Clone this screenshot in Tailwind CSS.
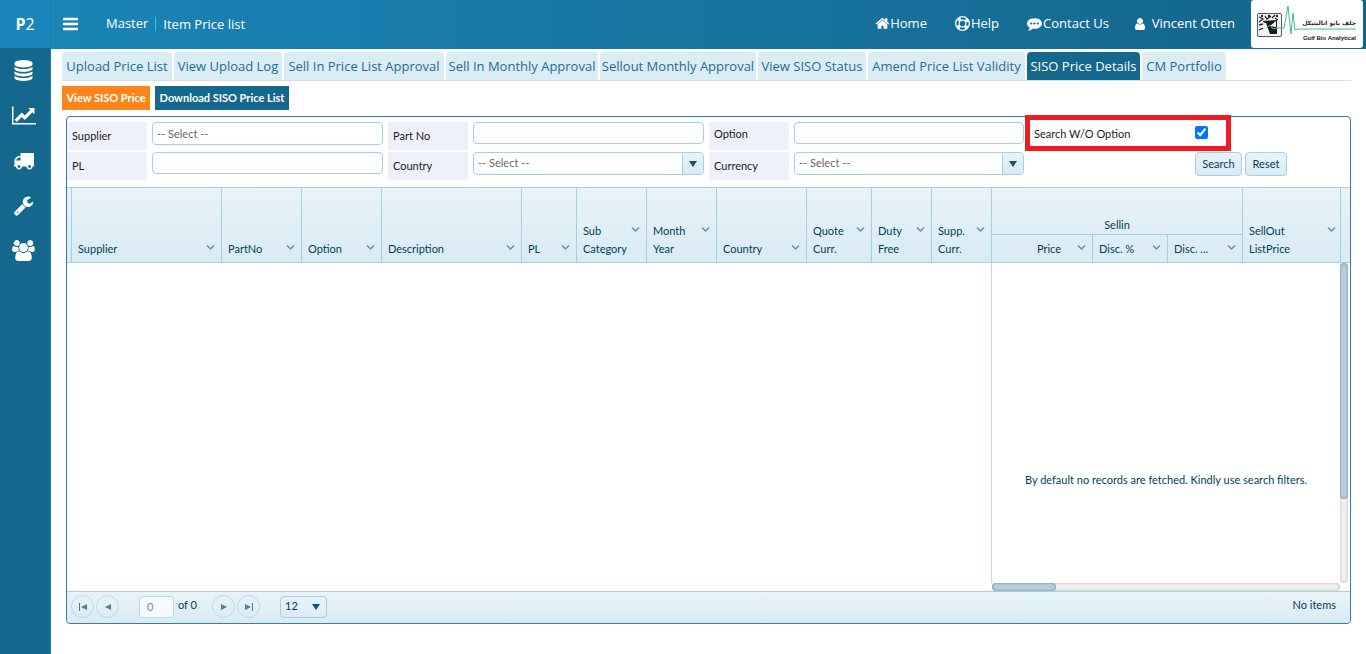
<!DOCTYPE html>
<html lang="en">
<head>
    <meta charset="UTF-8">
    <meta name="viewport" content="width=device-width, initial-scale=1.0">
    <title>Item Price list</title>
    <script src="https://cdn.jsdelivr.net/npm/@tailwindcss/browser@4"></script>
</head>
<body class="flex min-h-screen bg-white font-['Lato',sans-serif] text-[11px] text-[#003f59]">

    <!-- Sidebar -->
    <aside class="w-[51px] shrink-0 bg-[#14688d] border-r border-[#1a7db0] font-['Open_Sans',sans-serif]">
        <a href="#" class="flex h-12 items-center justify-center bg-[#1a85b8] text-base text-white"><b>P</b>2</a>
        <nav class="flex flex-col items-center pr-[3px] text-white">
            <a href="#" aria-label="Master" class="flex h-[45px] items-center"><svg class="size-[21px]" viewBox="0 0 1792 1792" fill="currentColor"><path d="M896 768q237 0 443-43t325-127v170q0 69-103 128t-280 93.5-385 34.5-385-34.5-280-93.5-103-128v-170q119 84 325 127t443 43zm0 768q237 0 443-43t325-127v170q0 69-103 128t-280 93.5-385 34.5-385-34.5-280-93.5-103-128v-170q119 84 325 127t443 43zm0-384q237 0 443-43t325-127v170q0 69-103 128t-280 93.5-385 34.5-385-34.5-280-93.5-103-128v-170q119 84 325 127t443 43zm0-1152q208 0 385 34.5t280 93.5 103 128v128q0 69-103 128t-280 93.5-385 34.5-385-34.5-280-93.5-103-128v-128q0-69 103-128t280-93.5 385-34.5z"/></svg></a>
            <a href="#" aria-label="Sales" class="flex h-[45px] items-center"><svg class="h-[21px] w-6" viewBox="0 0 2048 1792" fill="currentColor"><path d="M2048 1536v128h-2048v-1536h128v1408h1920zm-128-1248v435q0 21-19.5 29.5t-35.5-7.5l-121-121-633 633q-10 10-23 10t-23-10l-233-233-416 416-192-192 585-585q10-10 23-10t23 10l233 233 464-464-121-121q-16-16-7.5-35.5t29.5-19.5h435q14 0 23 9t9 23z"/></svg></a>
            <a href="#" aria-label="Logistics" class="flex h-[45px] items-center"><svg class="size-[21px]" viewBox="0 0 1792 1792" fill="currentColor"><path d="M640 1408q0-52-38-90t-90-38-90 38-38 90 38 90 90 38 90-38 38-90zm-384-512h384v-256h-158q-13 0-22 9l-195 195q-9 9-9 22v30zm1280 512q0-52-38-90t-90-38-90 38-38 90 38 90 90 38 90-38 38-90zm256-1088v1024q0 15-4 26.5t-13.5 18.5-16.5 11.5-23.5 6-22.5 2-25.5 0-22.5-.5q0 106-75 181t-181 75-181-75-75-181h-384q0 106-75 181t-181 75-181-75-75-181h-64q-3 0-22.5.5t-25.5 0-22.5-2-23.5-6-16.5-11.5-13.5-18.5-4-26.5q0-26 19-45t45-19v-320q0-8-.5-35t0-38 2.5-34.5 6.5-37 14-30.5 22.5-30l198-198q19-19 50.5-32t58.5-13h160v-192q0-26 19-45t45-19h1024q26 0 45 19t19 45z"/></svg></a>
            <a href="#" aria-label="Service" class="flex h-[45px] items-center"><svg class="size-[21px]" viewBox="0 0 1792 1792" fill="currentColor"><path d="M448 1472q0-26-19-45t-45-19-45 19-19 45 19 45 45 19 45-19 19-45zm644-420l-682 682q-37 37-90 37-52 0-91-37l-106-108q-38-36-38-90 0-53 38-91l681-681q39 98 114.5 173.5t173.5 114.5zm634-435q0 39-23 106-47 134-164.5 217.5t-258.5 83.5q-185 0-316.5-131.5t-131.5-316.5 131.5-316.5 316.5-131.5q58 0 121.5 16.5t107.5 46.5q16 11 16 28t-16 28l-293 169v224l193 107q5-3 79-48.5t135.5-81 70.5-35.5q15 0 23.5 10t8.5 25z"/></svg></a>
            <a href="#" aria-label="Users" class="flex h-[45px] items-center"><svg class="h-[21px] w-[23px]" viewBox="0 0 1920 1792" fill="currentColor"><path d="M593 896q-162 5-265 128h-134q-82 0-138-40.5t-56-118.5q0-353 124-353 6 0 43.5 21t97.5 42.5 119 21.5q67 0 133-23-5 37-5 66 0 139 81 256zm1071 637q0 120-73 189.5t-194 69.5h-874q-121 0-194-69.5t-73-189.5q0-53 3.5-103.5t14-109 26.5-108.5 43-97.5 62-81 85.5-53.5 111.5-20q10 0 43 21.5t73 48 107 48 135 21.5 135-21.5 107-48 73-48 43-21.5q61 0 111.5 20t85.5 53.5 62 81 43 97.5 26.5 108.5 14 109 3.5 103.5zm-1024-1277q0 106-75 181t-181 75-181-75-75-181 75-181 181-75 181 75 75 181zm704 384q0 159-112.5 271.5t-271.5 112.5-271.5-112.5-112.5-271.5 112.5-271.5 271.5-112.5 271.5 112.5 112.5 271.5zm576 225q0 78-56 118.5t-138 40.5h-134q-103-123-265-128 81-117 81-256 0-29-5-66 66 23 133 23 59 0 119-21.5t97.5-42.5 43.5-21q124 0 124 353zm-128-609q0 106-75 181t-181 75-181-75-75-181 75-181 181-75 181 75 75 181z"/></svg></a>
        </nav>
    </aside>

    <div class="min-w-0 flex-1">
        <!-- Header -->
        <header class="flex h-[49px] items-center bg-linear-to-r from-[#1a84b7] to-[#14658a] pb-[2px] pl-3 pr-[3px] font-['Open_Sans',sans-serif] text-[13px] text-white">
            <button type="button" aria-label="Menu" class="mr-7"><svg class="h-[14px] w-[15px]" viewBox="128 192 1536 1408" fill="currentColor"><path d="M1664 1344v128q0 26-19 45t-45 19h-1408q-26 0-45-19t-19-45v-128q0-26 19-45t45-19h1408q26 0 45 19t19 45zm0-512v128q0 26-19 45t-45 19h-1408q-26 0-45-19t-19-45v-128q0-26 19-45t45-19h1408q26 0 45 19t19 45zm0-512v128q0 26-19 45t-45 19h-1408q-26 0-45-19t-19-45v-128q0-26 19-45t45-19h1408q26 0 45 19t19 45z"/></svg></button>
            <span class="mr-[7px]">Master</span>
            <span class="border-l border-[#35c5e8] pl-[7px] leading-[14px]">Item Price list</span>
            <nav class="ml-auto flex items-center">
                <a href="#" class="mr-7 flex items-center"><svg class="size-[15px]" viewBox="0 0 1792 1792" fill="currentColor"><path d="M1472 992v480q0 26-19 45t-45 19h-384v-384h-256v384h-384q-26 0-45-19t-19-45v-480q0-1 .5-3t.5-3l575-474 575 474q1 2 1 6zm223-69l-62 74q-8 9-21 11h-3q-13 0-21-7l-692-577-692 577q-12 8-24 7-13-2-21-11l-62-74q-8-10-7-23.5t11-21.5l719-599q32-26 76-26t76 26l244 204v-195q0-14 9-23t23-9h192q14 0 23 9t9 23v408l219 182q10 8 11 21.5t-7 23.5z"/></svg>Home</a>
                <a href="#" class="mr-7 flex items-center gap-px"><svg class="size-[15px]" viewBox="0 0 16 16" fill="none" stroke="currentColor"><circle cx="8" cy="8" r="7.3" stroke-width="1.4"/><circle cx="8" cy="8" r="3.6" stroke-width="1.2"/><circle cx="8" cy="8" r="5.5" stroke-width="3.4" stroke-dasharray="3.4 5.24" stroke-dashoffset="-2.6"/></svg>Help</a>
                <a href="#" class="mr-6 flex items-center gap-px"><svg class="size-[15px]" viewBox="0 0 1792 1792" fill="currentColor"><path d="M640 896q0-53-37.5-90.5t-90.5-37.5-90.5 37.5-37.5 90.5 37.5 90.5 90.5 37.5 90.5-37.5 37.5-90.5zm384 0q0-53-37.5-90.5t-90.5-37.5-90.5 37.5-37.5 90.5 37.5 90.5 90.5 37.5 90.5-37.5 37.5-90.5zm384 0q0-53-37.5-90.5t-90.5-37.5-90.5 37.5-37.5 90.5 37.5 90.5 90.5 37.5 90.5-37.5 37.5-90.5zm384 0q0 174-120 321.5t-326 233-450 85.5q-110 0-211-18-173 173-435 229-52 10-86 13-12 1-22-6t-13-18q-4-15 20-37 5-5 23.5-21.5t25.5-23.5 23.5-25.5 24-31.5 20.5-37 20-48 14.5-57.5 12.5-72.5q-146-90-229.5-216.5t-83.5-269.5q0-174 120-321.5t326-233 450-85.5 450 85.5 326 233 120 321.5z"/></svg>Contact Us</a>
                <a href="#" class="mr-4 flex items-center gap-[5px]"><svg class="size-[14px]" viewBox="0 0 1792 1792" fill="currentColor"><path d="M1536 1399q0 109-62.5 187t-150.5 78h-854q-88 0-150.5-78t-62.5-187q0-85 8.5-160.5t31.5-152 58.5-131 94-89 134.5-34.5q131 128 313 128t313-128q76 0 134.5 34.5t94 89 58.5 131 31.5 152 8.5 160.5zm-256-887q0 159-112.5 271.5t-271.5 112.5-271.5-112.5-112.5-271.5 112.5-271.5 271.5-112.5 271.5 112.5 112.5 271.5z"/></svg>Vincent Otten</a>
            </nav>
            <!-- Company logo -->
            <svg class="h-12 w-28 self-start" viewBox="0 0 112 48" role="img" aria-label="Gulf Bio Analytical">
                <rect width="112" height="48" rx="3" fill="#fff"/>
                <rect x="6.500" y="13.500" width="24" height="23" rx="1.500" fill="#f4f4f4" stroke="#555"/>
                <path d="M12 21l14-1v14H17z" fill="#1c1c1c"/>
                <path d="M10 22l5 1 4 11h-7zM19 26l6-5v6z" fill="#f4f4f4"/>
                <path d="M8 17l4 2-4 3M14 16l2 3 4-3M21 18l3-3M8 25l4-1M8 30l4-2M24 18l3 2" stroke="#222" stroke-width="1.300" fill="none"/>
                <circle cx="11" cy="16" r="1.200" fill="#222"/><circle cx="26" cy="16" r="1.200" fill="#222"/><circle cx="18" cy="16" r="1.200" fill="#222"/>
                <path d="M16 28l3-3 3 4 3-1h8l4-22 3 28 2-21 2 17 3-1h58" fill="none" stroke="#3fbf83"/>
                <text x="105" y="25" text-anchor="end" direction="ltr" font-family="DejaVu Sans, sans-serif" font-size="6" font-weight="bold" fill="#222">جلف بايو اناليتيكل</text>
                <text x="105" y="40" text-anchor="end" font-family="Liberation Sans, sans-serif" font-size="6" font-weight="bold" fill="#222">Gulf Bio Analytical</text>
            </svg>
        </header>

        <main class="pl-[11px] pr-[15px] pt-[3px]">
            <!-- Tabs -->
            <nav class="flex gap-[2px] border-b border-[#dddddd] text-center font-['Open_Sans',sans-serif] text-[13px] leading-7 whitespace-nowrap text-[#1f6d92]">
                <a href="#" class="w-[110px] rounded-t bg-[#daecf4]">Upload Price List</a>
                <a href="#" class="w-[108px] rounded-t bg-[#daecf4]">View Upload Log</a>
                <a href="#" class="w-[160px] rounded-t bg-[#daecf4]">Sell In Price List Approval</a>
                <a href="#" class="w-[152px] rounded-t bg-[#daecf4]">Sell In Monthly Approval</a>
                <a href="#" class="w-[156px] rounded-t bg-[#daecf4]">Sellout Monthly Approval</a>
                <a href="#" class="w-[108px] rounded-t bg-[#daecf4]">View SISO Status</a>
                <a href="#" class="w-[157px] rounded-t bg-[#daecf4]">Amend Price List Validity</a>
                <a href="#" class="w-[113px] rounded-t bg-[#14688d] text-white">SISO Price Details</a>
                <a href="#" class="w-[84px] rounded-t bg-[#daecf4]">CM Portfolio</a>
            </nav>

            <div class="mt-[5px] flex gap-[5px] text-[11px] font-bold whitespace-nowrap text-white">
                <button type="button" class="h-6 w-[88px] bg-[#ff851b]">View SISO Price</button>
                <button type="button" class="h-6 w-[134px] bg-[#14688d]">Download SISO Price List</button>
            </div>

            <section class="ml-1 mt-[6px] rounded border border-[#337ab7]">
                <!-- Filters -->
                <form class="grid grid-cols-[80px_231px_80px_231px_80px_230px_1fr] gap-x-[5px] gap-y-[2px] pt-[5px] text-[#222222]">
                    <label for="supplier" class="h-7 bg-[#eef1f9] pl-[5px] leading-7">Supplier</label>
                    <input id="supplier" type="text" placeholder="-- Select --" class="h-[23px] rounded border border-[#a3d0e4] px-1 placeholder:text-[#666666]">
                    <label for="partno" class="h-7 bg-[#eef1f9] pl-[5px] leading-7">Part No</label>
                    <input id="partno" type="text" class="h-[22px] rounded border border-[#a3d0e4] px-1">
                    <label for="option" class="h-7 bg-[#eef1f9] pl-[5px] leading-6">Option</label>
                    <input id="option" type="text" class="h-[22px] rounded border border-[#a3d0e4] px-1">
                    <div class="relative flex h-6 items-center pl-[5px]">
                        <label for="without-option" class="w-[161px]">Search W/O Option</label>
                        <input id="without-option" type="checkbox" checked class="mb-1 size-[13px]">
                        <span class="pointer-events-none absolute -left-1 -top-[7px] h-9 w-[206px] border-5 border-[#ed1c24]"></span>
                    </div>

                    <label for="pl" class="h-7 bg-[#eef1f9] pl-[5px] leading-7">PL</label>
                    <input id="pl" type="text" class="h-[22px] rounded border border-[#a3d0e4] px-1">
                    <label for="country" class="h-7 bg-[#eef1f9] pl-[5px] leading-7">Country</label>
                    <div class="relative h-[23px]">
                        <select id="country" class="block h-full w-full appearance-none rounded border border-[#a3d0e4] px-1 text-[#666666]"><option>-- Select --</option></select>
                        <span class="pointer-events-none absolute inset-y-px right-px flex w-[21px] items-center justify-center rounded-r border-l border-[#a3d0e4] bg-linear-to-b from-[#e9f3f8] to-[#d9ebf4]"><svg class="h-[6px] w-2" viewBox="0 0 8 6" fill="#0c5470"><path d="M0 0h8L4 6z"/></svg></span>
                    </div>
                    <label for="currency" class="h-7 bg-[#eef1f9] pl-[5px] leading-7">Currency</label>
                    <div class="relative h-[23px]">
                        <select id="currency" class="block h-full w-full appearance-none rounded border border-[#a3d0e4] px-1 text-[#666666]"><option>-- Select --</option></select>
                        <span class="pointer-events-none absolute inset-y-px right-px flex w-[21px] items-center justify-center rounded-r border-l border-[#a3d0e4] bg-linear-to-b from-[#e9f3f8] to-[#d9ebf4]"><svg class="h-[6px] w-2" viewBox="0 0 8 6" fill="#0c5470"><path d="M0 0h8L4 6z"/></svg></span>
                    </div>
                    <div class="flex gap-[3px] pl-[166px] text-[#003f59]">
                        <button type="button" class="h-6 w-[47px] rounded border border-[#a3d0e4] bg-linear-to-b from-[#e9f3f8] to-[#d9ebf4]">Search</button>
                        <button type="button" class="h-6 w-[42px] rounded border border-[#a3d0e4] bg-linear-to-b from-[#e9f3f8] to-[#d9ebf4]">Reset</button>
                    </div>
                </form>

                <!-- Grid header -->
                <table class="mt-[7px] w-full table-fixed border-separate border-spacing-0 border-y border-[#a3d0e4] bg-linear-to-b from-[#e9f3f8] to-[#d9ebf4] text-left leading-[18px] [&_th]:border-[#a3d0e4] [&_th]:p-0 [&_th]:align-bottom [&_th]:font-normal">
                    <colgroup>
                        <col class="w-1"><col class="w-[150px]"><col class="w-[80px]"><col class="w-[80px]"><col class="w-[140px]"><col class="w-[55px]"><col class="w-[70px]"><col class="w-[70px]"><col class="w-[90px]"><col class="w-[65px]"><col class="w-[60px]"><col class="w-[60px]"><col class="w-[101px]"><col class="w-[75px]"><col class="w-[75px]"><col><col class="w-[10px]">
                    </colgroup>
                    <thead>
                        <tr class="h-[46px]">
                            <th rowspan="2"></th>
                            <th rowspan="2" class="border-l"><div class="flex justify-between pb-1 pl-[6px] pr-[6px]">Supplier<svg class="mt-1 h-2 w-[9px]" viewBox="0 0 9 8" fill="none" stroke="#5f93aa" stroke-width="1.500"><path d="M1 1.500l3.500 3.500L8 1.500"/></svg></div></th>
                            <th rowspan="2" class="border-l"><div class="flex justify-between pb-1 pl-[6px] pr-[6px]">PartNo<svg class="mt-1 h-2 w-[9px]" viewBox="0 0 9 8" fill="none" stroke="#5f93aa" stroke-width="1.500"><path d="M1 1.500l3.500 3.500L8 1.500"/></svg></div></th>
                            <th rowspan="2" class="border-l"><div class="flex justify-between pb-1 pl-[6px] pr-[6px]">Option<svg class="mt-1 h-2 w-[9px]" viewBox="0 0 9 8" fill="none" stroke="#5f93aa" stroke-width="1.500"><path d="M1 1.500l3.500 3.500L8 1.500"/></svg></div></th>
                            <th rowspan="2" class="border-l"><div class="flex justify-between pb-1 pl-[6px] pr-[6px]">Description<svg class="mt-1 h-2 w-[9px]" viewBox="0 0 9 8" fill="none" stroke="#5f93aa" stroke-width="1.500"><path d="M1 1.500l3.500 3.500L8 1.500"/></svg></div></th>
                            <th rowspan="2" class="border-l"><div class="flex justify-between pb-1 pl-[6px] pr-[6px]">PL<svg class="mt-1 h-2 w-[9px]" viewBox="0 0 9 8" fill="none" stroke="#5f93aa" stroke-width="1.500"><path d="M1 1.500l3.500 3.500L8 1.500"/></svg></div></th>
                            <th rowspan="2" class="border-l"><div class="flex justify-between pb-1 pl-[6px] pr-[6px]"><span>Sub<br>Category</span><svg class="mt-1 h-2 w-[9px] shrink-0" viewBox="0 0 9 8" fill="none" stroke="#5f93aa" stroke-width="1.500"><path d="M1 1.500l3.500 3.500L8 1.500"/></svg></div></th>
                            <th rowspan="2" class="border-l"><div class="flex justify-between pb-1 pl-[6px] pr-[6px]"><span>Month<br>Year</span><svg class="mt-1 h-2 w-[9px]" viewBox="0 0 9 8" fill="none" stroke="#5f93aa" stroke-width="1.500"><path d="M1 1.500l3.500 3.500L8 1.500"/></svg></div></th>
                            <th rowspan="2" class="border-l"><div class="flex justify-between pb-1 pl-[6px] pr-[6px]">Country<svg class="mt-1 h-2 w-[9px]" viewBox="0 0 9 8" fill="none" stroke="#5f93aa" stroke-width="1.500"><path d="M1 1.500l3.500 3.500L8 1.500"/></svg></div></th>
                            <th rowspan="2" class="border-l"><div class="flex justify-between pb-1 pl-[6px] pr-[6px]"><span>Quote<br>Curr.</span><svg class="mt-1 h-2 w-[9px]" viewBox="0 0 9 8" fill="none" stroke="#5f93aa" stroke-width="1.500"><path d="M1 1.500l3.500 3.500L8 1.500"/></svg></div></th>
                            <th rowspan="2" class="border-l"><div class="flex justify-between pb-1 pl-[6px] pr-[6px]"><span>Duty<br>Free</span><svg class="mt-1 h-2 w-[9px]" viewBox="0 0 9 8" fill="none" stroke="#5f93aa" stroke-width="1.500"><path d="M1 1.500l3.500 3.500L8 1.500"/></svg></div></th>
                            <th rowspan="2" class="border-l"><div class="flex justify-between pb-1 pl-[6px] pr-[6px]"><span>Supp.<br>Curr.</span><svg class="mt-1 h-2 w-[9px]" viewBox="0 0 9 8" fill="none" stroke="#5f93aa" stroke-width="1.500"><path d="M1 1.500l3.500 3.500L8 1.500"/></svg></div></th>
                            <th colspan="3" class="border-l text-center">Sellin</th>
                            <th rowspan="2" class="border-l"><div class="flex justify-between pb-1 pl-[6px] pr-1"><span>SellOut<br>ListPrice</span><svg class="mt-1 h-2 w-[9px]" viewBox="0 0 9 8" fill="none" stroke="#5f93aa" stroke-width="1.500"><path d="M1 1.500l3.500 3.500L8 1.500"/></svg></div></th>
                            <th rowspan="2" class="border-l"></th>
                        </tr>
                        <tr class="h-7">
                            <th class="border-l border-t"><div class="flex justify-end gap-4 pb-1 pl-[6px] pr-[6px]">Price<svg class="mt-1 h-2 w-[9px]" viewBox="0 0 9 8" fill="none" stroke="#5f93aa" stroke-width="1.500"><path d="M1 1.500l3.500 3.500L8 1.500"/></svg></div></th>
                            <th class="border-l border-t"><div class="flex justify-between pb-1 pl-[6px] pr-[6px]">Disc. %<svg class="mt-1 h-2 w-[9px]" viewBox="0 0 9 8" fill="none" stroke="#5f93aa" stroke-width="1.500"><path d="M1 1.500l3.500 3.500L8 1.500"/></svg></div></th>
                            <th class="border-l border-t"><div class="flex justify-between pb-1 pl-[6px] pr-[6px]">Disc. ...<svg class="mt-1 h-2 w-[9px]" viewBox="0 0 9 8" fill="none" stroke="#5f93aa" stroke-width="1.500"><path d="M1 1.500l3.500 3.500L8 1.500"/></svg></div></th>
                        </tr>
                    </thead>
                </table>

                <!-- Grid body -->
                <div class="flex h-[328px]">
                    <div class="mb-2 w-[925px] shrink-0 border-r border-[#bddbe8]"></div>
                    <div class="flex min-w-0 flex-1 flex-col">
                        <p class="flex flex-1 items-center justify-center pt-[114px] whitespace-nowrap">By default no records are fetched. Kindly use search filters.</p>
                        <div class="h-2 rounded-full bg-[#efefef] shadow-[inset_0_0_3px_#bbbbbb]"><div class="h-2 w-16 rounded-full bg-[#b9cfda] shadow-[inset_0_0_3px_#6c8592]"></div></div>
                    </div>
                    <div class="mb-2 mr-[2px] w-2 rounded-full bg-[#efefef] shadow-[inset_0_0_3px_#bbbbbb]"><div class="h-[236px] w-2 rounded-full bg-[#b9cfda] shadow-[inset_0_0_3px_#6c8592]"></div></div>
                </div>

                <!-- Pager -->
                <footer class="flex h-8 items-center rounded-b border-t border-[#a3d0e4] bg-linear-to-b from-[#e9f3f8] to-[#d9ebf4] pb-[2px] pl-1 pr-[14px]">
                    <button type="button" aria-label="First page" class="mr-[2px] flex size-[23px] items-center justify-center rounded-full border border-[#b7dae8]"><svg class="h-2 w-2" viewBox="0 0 8 8" fill="#4c8199"><path d="M0 0h1v8H0zM8 1v6L2 4z"/></svg></button>
                    <button type="button" aria-label="Previous page" class="flex size-[23px] items-center justify-center rounded-full border border-[#b7dae8]"><svg class="h-2 w-2" viewBox="0 0 8 8" fill="#4c8199"><path d="M7 1v6L1 4z"/></svg></button>
                    <input type="text" value="0" aria-label="Page" class="ml-5 mr-1 h-[22px] w-[35px] rounded border border-[#b7dae8] bg-[#f6fafc] px-[7px] text-[#6f8f9e]">
                    <span class="w-[34px] pb-[2px]">of 0</span>
                    <button type="button" aria-label="Next page" class="mr-[2px] flex size-[23px] items-center justify-center rounded-full border border-[#b7dae8]"><svg class="h-2 w-2" viewBox="0 0 8 8" fill="#4c8199"><path d="M1 1v6l6-3z"/></svg></button>
                    <button type="button" aria-label="Last page" class="flex size-[23px] items-center justify-center rounded-full border border-[#b7dae8]"><svg class="h-2 w-2" viewBox="0 0 8 8" fill="#4c8199"><path d="M7 0h1v8H7zM0 1v6l6-3z"/></svg></button>
                    <div class="relative ml-5">
                        <select aria-label="Page size" class="block h-[22px] w-[47px] appearance-none rounded border border-[#a3d0e4] px-1"><option>12</option></select>
                        <svg class="pointer-events-none absolute right-[7px] top-2 h-[6px] w-2" viewBox="0 0 8 6" fill="#0c5470"><path d="M0 0h8L4 6z"/></svg>
                    </div>
                    <span class="ml-auto pb-[2px]">No items</span>
                </footer>
            </section>
        </main>
    </div>
</body>
</html>
